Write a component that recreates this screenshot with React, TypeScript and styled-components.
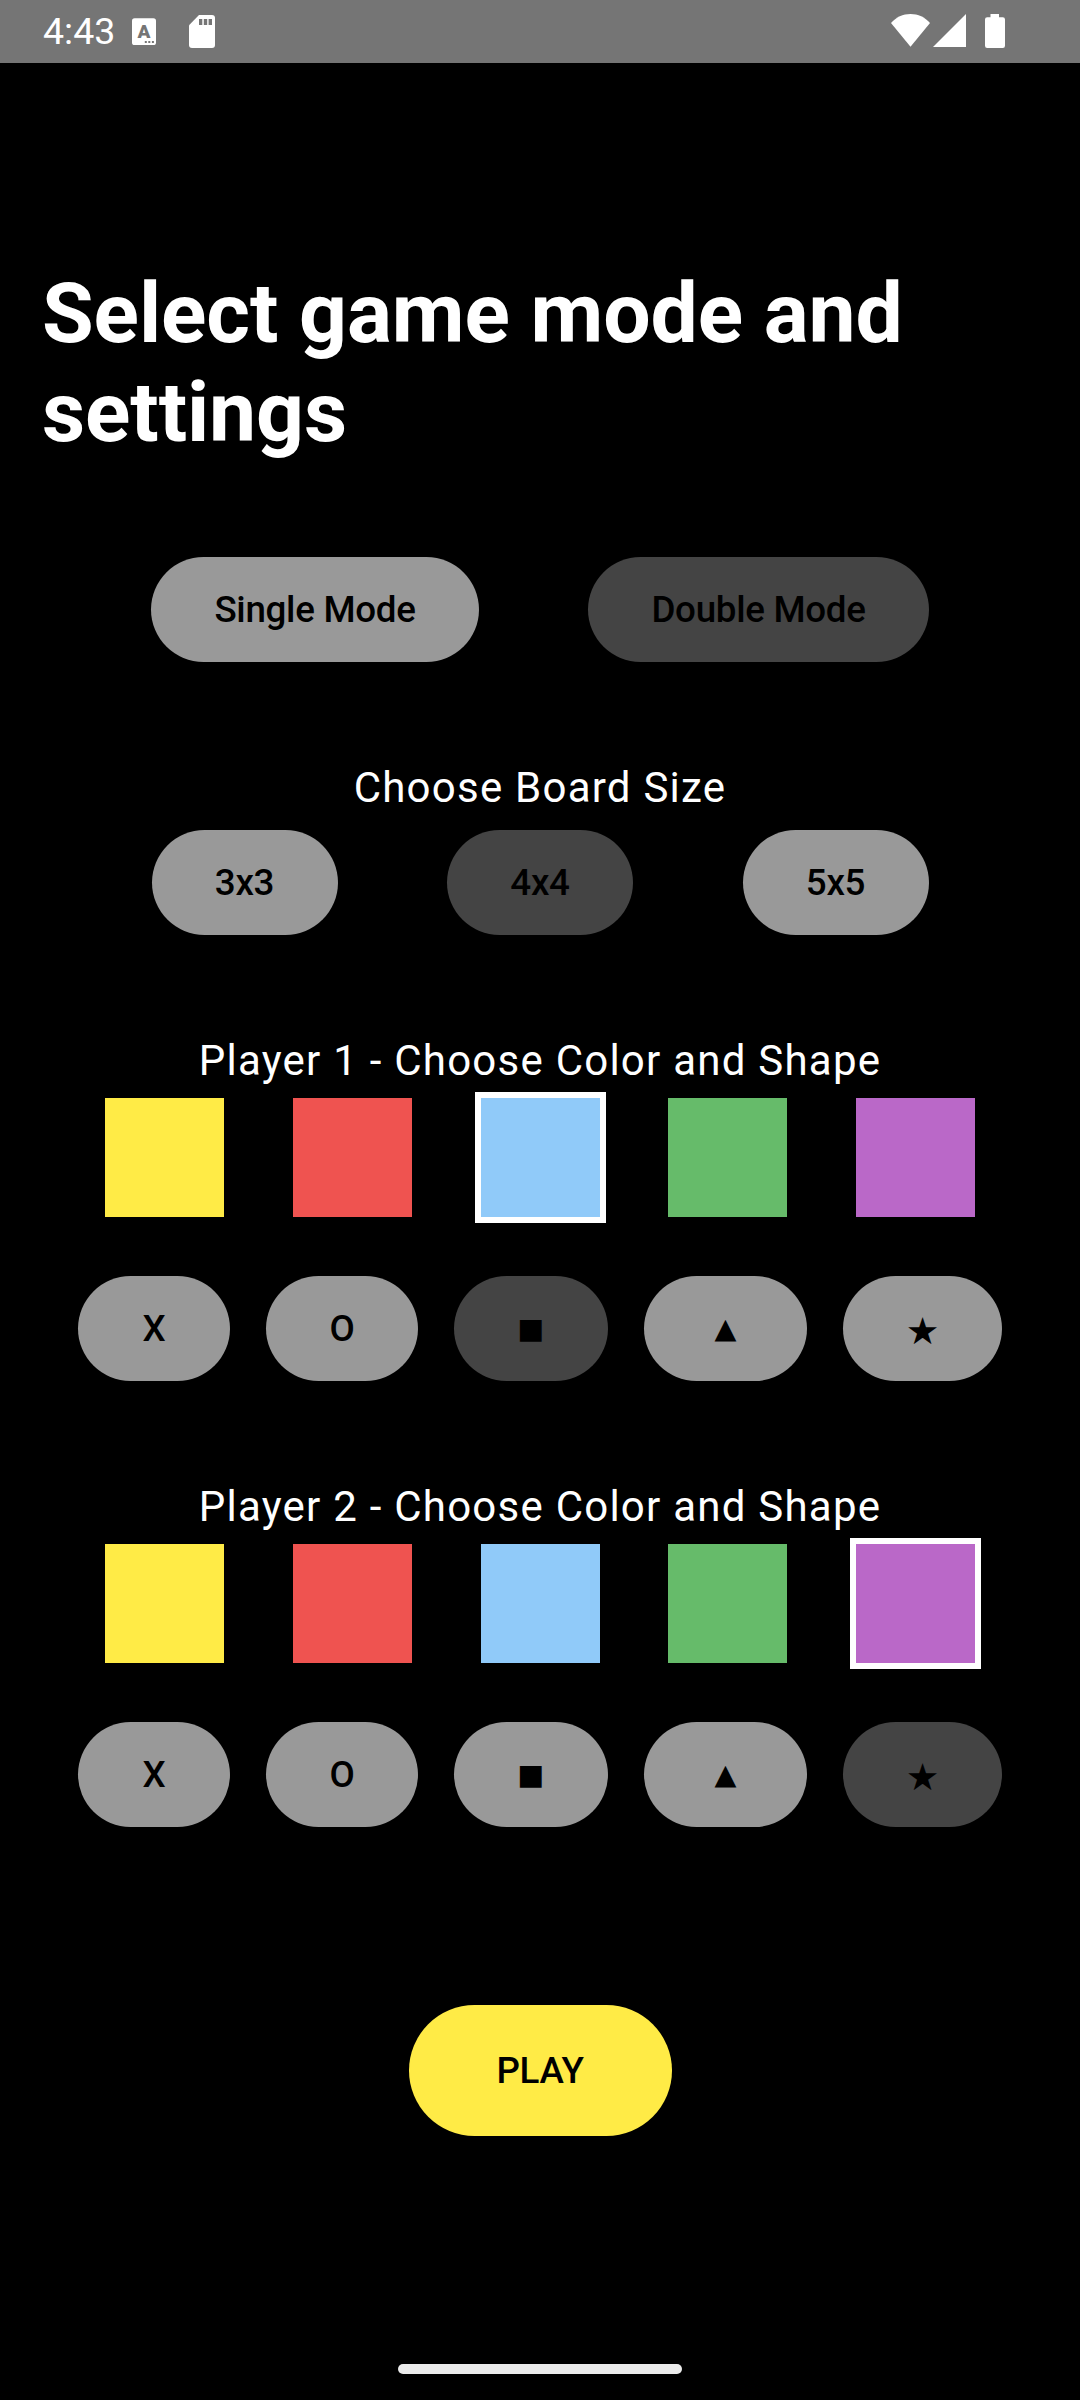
import React, { useState } from "react";
import styled, { createGlobalStyle } from "styled-components";

const GlobalStyle = createGlobalStyle`
  *, *::before, *::after { box-sizing: border-box; }
  html, body { margin: 0; padding: 0; background: #000; }
  body { font-family: Roboto, "Noto Sans", sans-serif; }
  button { font: inherit; border: 0; padding: 0; margin: 0; cursor: pointer; }
`;

const Screen = styled.div`
  width: 1080px;
  height: 2400px;
  display: flex;
  flex-direction: column;
  background: #000;
  color: #fff;
  overflow: hidden;
`;

const StatusBar = styled.header`
  height: 63px;
  flex: none;
  display: flex;
  justify-content: space-between;
  background: #757575;
  padding: 0 75px 0 43px;
`;

const StatusGroup = styled.div`
  display: flex;
  align-items: flex-start;
`;

const Clock = styled.span`
  width: 89px;
  font-size: 37.5px;
  line-height: 44px;
  padding-top: 9px;
  white-space: nowrap;
`;

const StatusIcon = styled.svg<{ $top: number; $gap?: number }>`
  display: block;
  flex: none;
  margin-top: ${(p) => p.$top}px;
  margin-right: ${(p) => p.$gap ?? 0}px;
`;

const Main = styled.main`
  display: flex;
  flex-direction: column;
  padding: 201px 42px 0;
`;

const Title = styled.h1`
  margin: 0 0 84px;
  font-size: 84px;
  line-height: 99px;
  font-weight: 700;
  letter-spacing: -0.1px;
`;

const Section = styled.section`
  display: flex;
  flex-direction: column;
  margin-bottom: 84px;
`;

const Label = styled.h2`
  margin: 0;
  text-align: center;
  font-size: 42px;
  line-height: 63px;
  font-weight: 400;
  letter-spacing: 1.24px;
`;

const Row = styled.div`
  display: flex;
  justify-content: space-evenly;
`;

const PillRow = styled(Row)`
  padding: 11px 0 10px;
`;

const SwatchRow = styled(Row)`
  margin-bottom: 42px;
  padding-left: 0.25px;
`;

const Pill = styled.button<{ $selected: boolean; $width: number }>`
  width: ${(p) => p.$width}px;
  height: 105px;
  border-radius: 53px;
  display: flex;
  align-items: center;
  justify-content: center;
  background: ${(p) => (p.$selected ? "#444444" : "#999999")};
  color: #000;
  font-size: 36.75px;
  line-height: 52px;
  font-weight: 500;
  letter-spacing: -0.3px;
  white-space: nowrap;
`;

const Glyph = styled.span<{ $size: number; $lower: number }>`
  font-family: "DejaVu Sans", sans-serif;
  font-weight: 400;
  font-size: ${(p) => p.$size}px;
  letter-spacing: 0;
  padding-top: ${(p) => p.$lower}px;
`;

const Swatch = styled.button<{ $color: string; $selected: boolean }>`
  width: 131px;
  height: 131px;
  background: ${(p) => p.$color};
  border: 6px solid ${(p) => (p.$selected ? "#fff" : "#000")};
`;

const PlayButton = styled.button`
  align-self: center;
  width: 263px;
  height: 131px;
  margin-top: 84px;
  border-radius: 66px;
  background: #ffeb46;
  color: #000;
  font-size: 36.75px;
  line-height: 52px;
  font-weight: 500;
  letter-spacing: -0.3px;
`;

const NavArea = styled.footer`
  margin-top: auto;
  height: 36px;
  display: flex;
  justify-content: center;
  align-items: flex-start;
`;

const NavHandle = styled.div`
  width: 284px;
  height: 10px;
  border-radius: 5px;
  background: #ebebeb;
`;

const MODES = [
  { name: "Single Mode", width: 328 },
  { name: "Double Mode", width: 341 },
];
const SIZES = ["3x3", "4x4", "5x5"];
const COLORS = ["#ffeb46", "#ef5350", "#90caf9", "#66bb6a", "#ba68c8"];
const SHAPES = [
  { symbol: "X", width: 152 },
  { symbol: "O", width: 152 },
  { symbol: "■", width: 154, size: 28.5, lower: 0 },
  { symbol: "▲", width: 163, size: 28.5, lower: 0 },
  { symbol: "★", width: 159, size: 37.5, lower: 4 },
];

function PlayerSection({ name, color, shape }: { name: string; color: number; shape: number }) {
  const [pickedColor, setColor] = useState(color);
  const [pickedShape, setShape] = useState(shape);
  return (
    <Section>
      <Label>{name} - Choose Color and Shape</Label>
      <SwatchRow>
        {COLORS.map((c, i) => (
          <Swatch key={c} $color={c} $selected={i === pickedColor} onClick={() => setColor(i)} />
        ))}
      </SwatchRow>
      <PillRow>
        {SHAPES.map((s, i) => (
          <Pill key={s.symbol} $width={s.width} $selected={i === pickedShape} onClick={() => setShape(i)}>
            {s.size ? (
              <Glyph $size={s.size} $lower={s.lower ?? 0}>{s.symbol}</Glyph>
            ) : (
              s.symbol
            )}
          </Pill>
        ))}
      </PillRow>
    </Section>
  );
}

export default function App() {
  const [mode, setMode] = useState(1);
  const [size, setSize] = useState(1);
  return (
    <>
      <GlobalStyle />
      <Screen>
        <StatusBar>
          <StatusGroup>
            <Clock>4:43</Clock>
            <StatusIcon $top={18} $gap={33} width="24" height="27" viewBox="0 0 24 27">
              <rect x="0" y="0.3" width="24" height="26.7" rx="2.6" fill="#fff" />
              <text x="12" y="20.2" textAnchor="middle" fontFamily="Roboto" fontWeight="900" fontSize="19" fill="#757575">A</text>
              <path d="M12.8 23h2v2h-2zM16.3 23h2v2h-2zM19.9 23h2v2h-2z" fill="#757575" />
            </StatusIcon>
            <StatusIcon $top={15} width="26" height="33" viewBox="0 0 26 33">
              <path d="M10 0H23a3 3 0 0 1 3 3V30a3 3 0 0 1-3 3H3a3 3 0 0 1-3-3V10.2Z" fill="#fff" />
              <path d="M10 4h3.3v6H10zM14.8 4h3.4v6h-3.4zM19.6 4H23v6h-3.4z" fill="#757575" />
            </StatusIcon>
          </StatusGroup>
          <StatusGroup>
            <StatusIcon $top={14} $gap={3} width="39" height="33" viewBox="0 0 39 33">
              <path d="M0 9C5 3.2 12 0 19.5 0S34 3.2 39 9L19.5 32.8Z" fill="#fff" />
            </StatusIcon>
            <StatusIcon $top={14} $gap={19} width="33" height="33" viewBox="0 0 33 33">
              <path d="M33 0V33H0Z" fill="#fff" />
            </StatusIcon>
            <StatusIcon $top={14} width="20" height="34" viewBox="0 0 20 34">
              <path d="M5.5 0H14V3.3H17.8A2.2 2.2 0 0 1 20 5.5V31.8A2.2 2.2 0 0 1 17.8 34H2.2A2.2 2.2 0 0 1 0 31.8V5.5A2.2 2.2 0 0 1 2.2 3.3H5.5Z" fill="#fff" />
            </StatusIcon>
          </StatusGroup>
        </StatusBar>

        <Main>
          <Title>Select game mode and settings</Title>
          <Section>
            <PillRow>
              {MODES.map((m, i) => (
                <Pill key={m.name} $width={m.width} $selected={i === mode} onClick={() => setMode(i)}>
                  {m.name}
                </Pill>
              ))}
            </PillRow>
          </Section>
          <Section>
            <Label>Choose Board Size</Label>
            <PillRow>
              {SIZES.map((s, i) => (
                <Pill key={s} $width={186} $selected={i === size} onClick={() => setSize(i)}>
                  {s}
                </Pill>
              ))}
            </PillRow>
          </Section>
          <PlayerSection name="Player 1" color={2} shape={2} />
          <PlayerSection name="Player 2" color={4} shape={4} />
          <PlayButton>PLAY</PlayButton>
        </Main>

        <NavArea>
          <NavHandle />
        </NavArea>
      </Screen>
    </>
  );
}
